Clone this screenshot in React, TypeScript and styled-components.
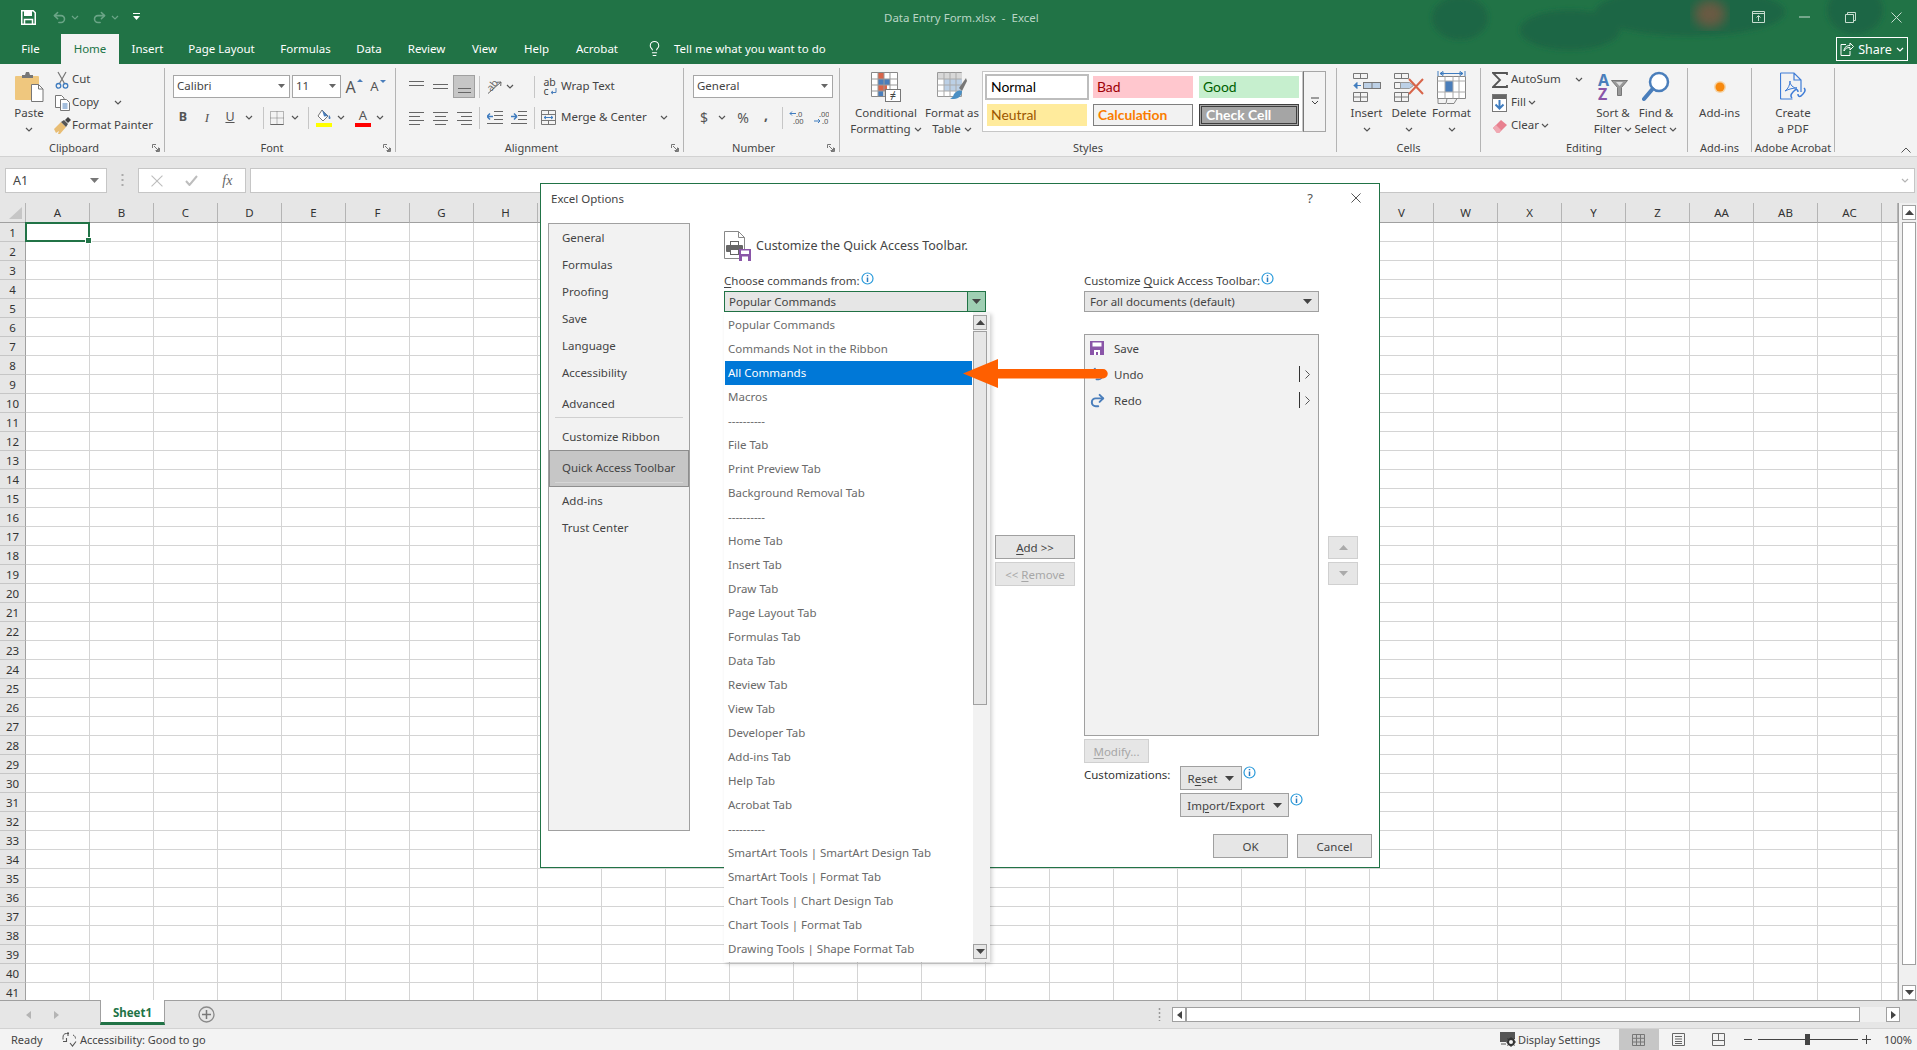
import React from "react";
import styled, { createGlobalStyle } from "styled-components";
import { Lightbulb, Undo2, Redo2 } from "lucide-react";

const Global = createGlobalStyle`
  html, body { margin: 0; width: 100%; height: 100%; overflow: hidden; background: #fff; }
  body { font-family: "Noto Sans", "Open Sans", sans-serif; font-size: 11.5px; color: #444; }
  * { box-sizing: border-box; }
  svg { display: block; flex: none; }
`;

const Page = styled.div`
  position: relative; width: 1917px; height: 1050px; display: flex; flex-direction: column; overflow: hidden;
`;

/* ---------- header ---------- */
const Header = styled.header`
  position: relative; height: 64px; background: #217346; display: flex; flex-direction: column; color: #fff; overflow: hidden;
`;
const Art = styled.svg`
  position: absolute; left: 1400px; top: 0;
`;
const TitleRow = styled.div`
  position: relative; height: 34px; display: flex; align-items: center;
`;
const Qat = styled.div`
  width: 884px; padding-left: 21px; display: flex; align-items: center;
`;
const QatSlot = styled.div<{ $w: number }>`
  width: ${p => p.$w}px; display: flex; align-items: center; gap: 4px;
`;
const DocTitle = styled.div`
  color: #b9d5c5; font-size: 11.5px; white-space: pre;
`;
const Controls = styled.div`
  margin-left: auto; margin-right: -2px; display: flex;
`;
const ControlBtn = styled.div`
  width: 46px; height: 30px; display: flex; align-items: center; justify-content: center;
`;
const TabRow = styled.nav`
  position: relative; height: 30px; display: flex; align-items: stretch;
`;
const Tab = styled.div<{ $w: number; $active?: boolean }>`
  width: ${p => p.$w}px; padding-bottom: 2px; display: flex; align-items: center; justify-content: center; white-space: nowrap;
  font-size: 11.5px;
  background: ${p => (p.$active ? "#f3f3f3" : "transparent")};
  color: ${p => (p.$active ? "#217346" : "#fff")};
`;
const TellMe = styled.div`
  margin-left: 15px; padding-bottom: 2px; display: flex; align-items: center; gap: 11px; font-size: 11.5px; white-space: nowrap;
`;
const ShareBtn = styled.div`
  margin: 3px 9px 3px auto; width: 72px; border: 1px solid #fff; display: flex; align-items: center; justify-content: center;
  gap: 4px; font-size: 12.5px;
`;

/* ---------- ribbon ---------- */
const Ribbon = styled.section`
  height: 93px; background: #f3f3f3; border-bottom: 1px solid #d2d2d2; padding-top: 4px; display: flex; position: relative;
`;
const Group = styled.div<{ $w: number }>`
  width: ${p => p.$w}px; height: 84px; border-right: 1px solid #b4b4b4; display: flex; flex-direction: column; flex: none;
`;
const GroupBody = styled.div<{ $pl?: number }>`
  height: 72px; display: flex; padding-left: ${p => p.$pl ?? 0}px;
`;
const GroupFoot = styled.div`
  height: 16px; margin-bottom: -4px; display: flex; align-items: center;
`;
const GroupLabel = styled.div`
  flex: 1; text-align: center; font-size: 11px; line-height: 16px; white-space: nowrap; color: #444;
`;
const Launcher = styled.div`
  width: 16px; display: flex; justify-content: center;
`;
const Big = styled.div<{ $w: number }>`
  width: ${p => p.$w}px; flex: none; padding-top: 4px; display: flex; flex-direction: column; align-items: center;
`;
const BigIcon = styled.div`
  height: 30px; margin-bottom: 3px; display: flex; align-items: center; justify-content: center;
`;
const BigLine = styled.div`
  height: 16px; line-height: 16px; display: flex; align-items: center; gap: 3px; white-space: nowrap; font-size: 11.5px;
`;
const Stack = styled.div<{ $pt?: number; $w?: number }>`
  display: flex; flex-direction: column; padding-top: ${p => p.$pt ?? 0}px;
  ${p => (p.$w ? `width: ${p.$w}px; flex: none;` : "")}
`;
const Row = styled.div<{ $ml?: number; $mt?: number }>`
  height: 23px; display: flex; align-items: center;
  margin-left: ${p => p.$ml ?? 0}px; margin-top: ${p => p.$mt ?? 0}px;
`;
const Slot = styled.div<{ $w: number; $ml?: number }>`
  width: ${p => p.$w}px; margin-left: ${p => p.$ml ?? 0}px; flex: none; display: flex; align-items: center; justify-content: center; position: relative;
`;
const ActiveSlot = styled.div`
  width: 22px; height: 23px; margin: 0 1px; background: #c6c6c6; border: 1px solid #a0a0a0; display: flex; align-items: center; justify-content: center; flex: none;
`;
const Txt = styled.span<{ $w?: number; $ml?: number }>`
  white-space: nowrap; font-size: 11.5px; flex: none; padding-bottom: 2px;
  margin-left: ${p => p.$ml ?? 0}px;
  ${p => (p.$w ? `width: ${p.$w}px;` : "")}
`;
const StatusTxt = styled(Txt)`
  font-size: 11px; padding-bottom: 0;
`;
const VSep = styled.div<{ $w: number; $ml?: number }>`
  width: ${p => p.$w}px; margin-left: ${p => p.$ml ?? 0}px; flex: none; display: flex; justify-content: center;
  &::before { content: ""; width: 1px; height: 22px; background: #c6c6c6; }
`;
const Combo = styled.div<{ $w: number; $ml?: number }>`
  width: ${p => p.$w}px; height: 23px; margin-left: ${p => p.$ml ?? 0}px; background: #fff; border: 1px solid #a6a6a6;
  display: flex; align-items: center; justify-content: space-between; padding: 0 4px 2px 3px; flex: none; font-size: 11.5px;
`;
const Glyph = styled.span<{ $size?: number; $bold?: boolean; $italic?: boolean; $under?: boolean; $serif?: boolean; $pb?: number }>`
  font-size: ${p => p.$size ?? 12}px; font-weight: ${p => (p.$bold ? 700 : 400)};
  font-style: ${p => (p.$italic ? "italic" : "normal")};
  font-family: ${p => (p.$serif ? '"Liberation Serif", serif' : "inherit")};
  text-decoration: ${p => (p.$under ? "underline" : "none")};
  padding-bottom: ${p => p.$pb ?? 0}px;
  color: #555; line-height: 1;
`;
const SizeGlyph = styled.div`
  display: flex; align-items: flex-start; gap: 1px;
`;
const ColorGlyph = styled.div`
  display: flex; flex-direction: column; align-items: center; line-height: 1;
`;
const ColorBar = styled.div<{ $c: string }>`
  width: 16px; height: 4px; background: ${p => p.$c}; margin-top: 1px;
`;
const Gallery = styled.div`
  width: 321px; height: 61px; margin-top: 3px; background: #fff; border: 1px solid #c6c6c6; flex: none;
  display: grid; grid-template-columns: repeat(3, 100px); grid-auto-rows: 22px; gap: 6px; padding: 4px;
`;
const MoreBtn = styled.div`
  width: 23px; height: 61px; margin-top: 3px; border: 1px solid #a6a6a6; border-left-color: #777; flex: none; display: flex; align-items: center; justify-content: center;
`;
const StyleCell = styled.div<{ $bg: string; $c: string; $bold?: boolean; $border?: string; $outline?: string }>`
  background: ${p => p.$bg}; color: ${p => p.$c}; font-family: Lato, "Noto Sans", sans-serif; font-size: 13.9px;
  font-weight: ${p => (p.$bold ? 700 : 400)}; display: flex; align-items: center; padding: 0 0 2px 4px; white-space: nowrap;
  ${p => (p.$border ? `border: ${p.$border};` : "")}
  ${p => (p.$outline ? `outline: ${p.$outline};` : "")}
`;
const Collapse = styled.div`
  position: absolute; right: 6px; bottom: 3px;
`;
const WrapBox = styled.div`
  display: flex; flex-direction: column; font-size: 10.5px; line-height: 9px; color: #444;
`;
const WrapLine = styled.div`
  height: 9px; display: flex; align-items: center; gap: 1px;
`;
const OrientBox = styled.div`
  position: relative; width: 18px; height: 17px; display: flex; align-items: center; justify-content: center;
  font-size: 10px; line-height: 10px; color: #666;
  svg { position: absolute; left: 0; top: 0; }
`;
const OrientText = styled.span`
  display: block; transform: translate(-2px, -2px) rotate(-50deg);
`;
const SortBox = styled.div`
  display: flex; align-items: flex-start; width: 30px;
`;
const SortLetters = styled.div`
  display: flex; flex-direction: column; width: 12px; margin-right: 1px; font-weight: 700; font-size: 16px; line-height: 14px;
`;
const SortLetter = styled.span<{ $c: string }>`
  color: ${p => p.$c}; height: 14px; display: block;
`;
const Funnel = styled.svg`
  margin-top: 7px;
`;

/* ---------- formula bar ---------- */
const FormulaBar = styled.div`
  height: 46px; background: #e6e6e6; padding: 11px 2px 10px 5px; display: flex;
`;
const NameBox = styled.div`
  width: 102px; background: #fff; border: 1px solid #c6c6c6; display: flex; align-items: center; justify-content: space-between; padding: 0 7px; font-size: 12.5px; color: #444;
`;
const Dots = styled.div`
  width: 31px; display: flex; align-items: center; justify-content: center;
`;
const FxBox = styled.div`
  width: 108px; background: #fff; border: 1px solid #c6c6c6; display: flex; align-items: center;
`;
const FxSlot = styled.div`
  width: 36px; display: flex; align-items: center; justify-content: center;
`;
const FxText = styled.span`
  font-family: "Liberation Serif", serif; font-style: italic; font-size: 14px; color: #666;
`;
const FormulaInput = styled.div`
  flex: 1; margin-left: 4px; background: #fff; border: 1px solid #c6c6c6; display: flex; align-items: center; justify-content: flex-end; padding-right: 5px;
`;

/* ---------- sheet ---------- */
const SheetArea = styled.div`
  flex: 1; min-height: 0; display: flex;
`;
const Sheet = styled.div`
  width: 1898px; overflow: hidden; display: grid; grid-template-columns: 26px repeat(29, 64px) 16px; grid-template-rows: 20px; grid-auto-rows: 19px; background: #fff;
`;
const CornerCell = styled.div`
  background: #e6e6e6; border-right: 1px solid #b4b4b4; border-bottom: 1px solid #a0a0a0; display: flex; align-items: flex-end; padding: 0 0 3px 9px;
`;
const ColHead = styled.div`
  background: #e6e6e6; border-right: 1px solid #b4b4b4; border-bottom: 1px solid #a0a0a0; display: flex; align-items: center; justify-content: center; font-size: 11.5px; color: #333;
`;
const RowHead = styled.div`
  background: #e6e6e6; border-right: 1px solid #a0a0a0; border-bottom: 1px solid #c6c6c6; display: flex; align-items: center; justify-content: center; font-size: 11.5px; color: #333;
`;
const Cell = styled.div`
  border-right: 1px solid #d4d4d4; border-bottom: 1px solid #d4d4d4;
`;
const SelectedCell = styled(Cell)`
  position: relative;
  &::after { content: ""; position: absolute; left: -1px; top: -1px; right: -1px; bottom: -1px; border: 2px solid #217346; z-index: 1; }
  &::before { content: ""; position: absolute; right: -3px; bottom: -3px; width: 5px; height: 5px; background: #217346; border: 1px solid #fff; z-index: 2; }
`;
const VScroll = styled.div`
  width: 19px; background: #f0f0f0; border-left: 1px solid #a0a0a0; display: flex; flex-direction: column; align-items: flex-end; padding: 2px 1px 0 0;
`;
const ScrollBtn = styled.div<{ $w?: number; $h?: number; $bottom?: boolean }>`
  width: ${p => p.$w ?? 14}px; height: ${p => p.$h ?? 15}px; background: #fff; border: 1px solid #a0a0a0; flex: none; display: flex; align-items: center; justify-content: center;
  ${p => (p.$bottom ? "margin-top: auto;" : "")}
`;
const VThumb = styled.div`
  width: 14px; height: 743px; margin-top: 2px; background: #fff; border: 1px solid #a0a0a0; flex: none;
`;
const SheetBar = styled.div`
  height: 28px; background: #e6e6e6; border-top: 1px solid #a0a0a0; display: flex; position: relative;
`;
const NavArrows = styled.div`
  width: 100px; display: flex; align-items: center; padding-left: 26px; gap: 23px;
`;
const SheetTab = styled.div`
  width: 65px; height: 25px; margin-top: -1px; padding-top: 2px; background: #fff; border: 1px solid #a0a0a0; border-top: 0; border-bottom: 3px solid #217346; color: #217346; font-weight: 700; font-size: 11.5px; display: flex; align-items: center; justify-content: center;
`;
const AddSheet = styled.div`
  margin-left: 33px; display: flex; align-items: center;
`;
const HDots = styled.div`
  margin-left: 932px; width: 24px; display: flex; align-items: center; justify-content: center;
`;
const HScroll = styled.div`
  margin-left: 1px; display: flex; align-items: center; height: 15px; margin-top: 6px;
`;
const HThumb = styled.div`
  width: 674px; height: 15px; background: #fff; border: 1px solid #a0a0a0;
`;
const HTrack = styled.div`
  width: 26px; height: 15px; background: #f0f0f0;
`;
const StatusBar = styled.footer`
  height: 22px; background: #f3f3f3; border-top: 1px solid #d2d2d2; display: flex; align-items: center; padding-left: 11px; font-size: 11px; color: #444;
`;
const StatusRight = styled.div`
  margin-left: auto; margin-right: 5px; height: 100%; display: flex; align-items: center;
`;
const ViewBtn = styled.div<{ $on?: boolean }>`
  width: 40px; height: 100%; display: flex; align-items: center; justify-content: center; background: ${p => (p.$on ? "#c6c6c6" : "transparent")};
`;
const ZoomTrack = styled.div`
  position: relative; width: 100px; height: 1px; margin-left: 1px; background: #444;
`;
const ZoomThumb = styled.div`
  position: absolute; left: 47px; top: -5px; width: 5px; height: 11px; background: #444;
`;

/* ---------- dialog ---------- */
const Dialog = styled.div`
  position: absolute; left: 540px; top: 183px; width: 840px; height: 685px; background: #fff; border: 1px solid #217346; display: flex; flex-direction: column; z-index: 5; color: #444;
`;
const DialogHead = styled.div`
  height: 39px; flex: none; display: flex; padding: 0 0 11px 10px; align-items: center;
`;
const DialogTitle = styled.div`
  flex: 1; font-size: 11.5px; color: #444;
`;
const HeadBtn = styled.div`
  width: 46px; display: flex; align-items: center; justify-content: center; font-size: 13px; color: #555;
`;
const DialogBody = styled.div`
  flex: 1; display: flex; padding-left: 7px; min-height: 0;
`;
const Nav = styled.div`
  width: 142px; height: 608px; flex: none; background: #f2f2f2; border: 1px solid #a0a0a0; display: flex; flex-direction: column;
`;
const NavItem = styled.div<{ $mt?: number }>`
  height: 27px; flex: none; line-height: 27px; padding-left: 13px; font-size: 11.5px; white-space: nowrap; margin-top: ${p => p.$mt ?? 0}px; color: #444;
`;
const NavRule = styled.div`
  height: 1px; flex: none; margin: 0 6px; background: #d0d0d0;
`;
const NavSelected = styled.div`
  position: relative; height: 37px; flex: none; background: #c6c6c6; border: 1px solid #8e8e8e; padding-left: 12px; line-height: 33px; font-size: 11.5px; white-space: nowrap; color: #444;
  &::after { content: ""; position: absolute; left: 5px; right: 5px; bottom: 3px; height: 1px; background: #d6d6d6; }
`;
const Main = styled.div`
  flex: 1; margin-left: 34px; padding-top: 8px; display: flex; flex-direction: column;
`;
const Heading = styled.div`
  height: 30px; flex: none; display: flex; align-items: center; gap: 4px; font-size: 12.5px; color: #444; margin-bottom: 10px;
  span { padding-bottom: 2px; }
`;
const Columns = styled.div`
  display: flex; flex: none;
`;
const LeftCol = styled.div`
  width: 262px; flex: none; position: relative;
`;
const FieldLabel = styled.div`
  height: 20px; display: flex; align-items: center; gap: 1px; font-size: 11.5px; white-space: nowrap; color: #444;
  span { padding-bottom: 2px; }
  svg { margin-top: -5px; }
`;
const Mn = styled.span`
  text-decoration: underline; text-underline-offset: 2px;
`;
const OpenCombo = styled.div`
  height: 21px; background: #e6e6e6; border: 1px solid #217346; display: flex; align-items: center; padding-left: 4px; font-size: 11.5px; color: #444; position: relative;
`;
const ComboArrow = styled.div`
  margin-left: auto; width: 18px; height: 100%; background: #9fcfb3; border-left: 1px solid #217346; display: flex; align-items: center; justify-content: center;
`;
const Dropdown = styled.div`
  position: absolute; left: 0; top: 41px; width: 266px; height: 650px; background: #fff; box-shadow: 2px 2px 4px rgba(0, 0, 0, 0.18); display: flex; z-index: 6; padding-left: 1px;
`;
const DropList = styled.div`
  width: 247px; flex: none; padding-top: 1px; display: flex; flex-direction: column;
`;
const DropItem = styled.div<{ $on?: boolean }>`
  height: 24px; flex: none; line-height: 24px; padding-left: 3px; font-size: 11.5px; white-space: nowrap;
  background: ${p => (p.$on ? "#0078d7" : "transparent")}; color: ${p => (p.$on ? "#fff" : "#6a6a6a")};
`;
const DropScroll = styled.div`
  flex: 1; margin-left: 1px; background: #f2f2f2; padding: 3px 3px 3px 0; display: flex; flex-direction: column;
`;
const DropThumb = styled.div`
  height: 374px; margin-top: 1px; background: #e6e6e6; border: 1px solid #a0a0a0; flex: none;
`;
const DropBtn = styled.div<{ $bottom?: boolean }>`
  height: 15px; flex: none; background: #e6e6e6; border: 1px solid #a0a0a0; display: flex; align-items: center; justify-content: center;
  ${p => (p.$bottom ? "margin-top: auto;" : "")}
`;
const MidCol = styled.div`
  width: 98px; flex: none; padding: 264px 0 0 9px; display: flex; flex-direction: column; gap: 3px;
`;
const Btn = styled.div<{ $w: number; $off?: boolean; $mt?: number }>`
  width: ${p => p.$w}px; height: 24px; flex: none; display: flex; align-items: center; justify-content: center; gap: 8px; white-space: nowrap; font-size: 11.5px;
  margin-top: ${p => p.$mt ?? 0}px;
  background: #e6e6e6; border: 1px solid ${p => (p.$off ? "#d0d0d0" : "#a0a0a0")}; color: ${p => (p.$off ? "#a6a6a6" : "#444")};
`;
const RightCol = styled.div`
  width: 235px; flex: none; display: flex; flex-direction: column;
`;
const PlainCombo = styled.div`
  height: 21px; background: #e6e6e6; border: 1px solid #a0a0a0; display: flex; align-items: center; justify-content: space-between; padding: 0 6px 0 5px; font-size: 11.5px; color: #444;
`;
const QatList = styled.div`
  height: 402px; margin-top: 22px; background: #f2f2f2; border: 1px solid #a0a0a0; padding: 0 8px 0 2px; flex: none;
`;
const QatRow = styled.div`
  height: 26px; display: flex; align-items: center; font-size: 11.5px; color: #444;
`;
const QatIcon = styled.div`
  width: 20px; margin-right: 7px; display: flex; justify-content: center;
`;
const QatMore = styled.div`
  margin-left: auto; display: flex; align-items: center; gap: 5px;
  &::before { content: ""; width: 1px; height: 16px; background: #333; }
`;
const CustomRow = styled.div`
  display: flex; margin-top: 3px;
`;
const CustomLabel = styled.div`
  width: 96px; flex: none; font-size: 11.5px; line-height: 18px; white-space: nowrap; color: #333;
`;
const CustomBtns = styled.div`
  display: flex; flex-direction: column; gap: 3px;
`;
const BtnWithInfo = styled.div`
  display: flex; align-items: flex-start; gap: 0;
`;
const InfoWrap = styled.div`
  margin-left: 1px;
`;
const SideCol = styled.div`
  flex: none; margin-left: 9px; padding-top: 265px; display: flex; flex-direction: column; gap: 3px;
`;
const MoveBtn = styled.div`
  width: 30px; height: 23px; background: #e6e6e6; border: 1px solid #d0d0d0; display: flex; align-items: center; justify-content: center;
`;
const Footer = styled.div`
  margin-top: 17px; padding-right: 7px; display: flex; justify-content: flex-end; gap: 9px;
`;
const ArrowOverlay = styled.svg`
  position: absolute; left: 963px; top: 359px; z-index: 8;
`;

/* ---------- icons ---------- */
const Chev = ({ c = "#555" }: { c?: string }) => (
  <svg width="8" height="5" viewBox="0 0 8 5"><path d="M1 1l3 3 3-3" fill="none" stroke={c} strokeWidth="1.2" /></svg>
);
const Tri = ({ c = "#444", up }: { c?: string; up?: boolean }) => (
  <svg width="9" height="5" viewBox="0 0 9 5"><path d={up ? "M0 5L4.5 0 9 5z" : "M0 0h9L4.5 5z"} fill={c} /></svg>
);
const TriSm = () => (
  <svg width="7" height="4" viewBox="0 0 7 4"><path d="M0 0h7L3.5 4z" fill="#666" /></svg>
);
const MiniTri = ({ up }: { up?: boolean }) => (
  <svg width="6" height="3" viewBox="0 0 6 3"><path d={up ? "M0 3l3-3 3 3z" : "M0 0h6L3 3z"} fill="#4a7ebb" /></svg>
);
const LauncherIcon = () => (
  <svg width="8" height="8" viewBox="0 0 8 8"><path d="M.5 4V.5H4M7.5 4v3.5H4M2 2l4.5 4.5M6.5 3.5v3h-3" fill="none" stroke="#777" strokeWidth="1" /></svg>
);
const Info = () => (
  <svg width="13" height="13" viewBox="0 0 13 13"><circle cx="6.5" cy="6.5" r="5.5" fill="#fff" stroke="#2b9bdb" strokeWidth="1.2" /><path d="M6.5 3v1.3M6.5 5.5v4.5" stroke="#2b7bc0" strokeWidth="1.5" /></svg>
);
const SaveWhite = () => (
  <svg width="15" height="15" viewBox="0 0 15 15"><path d="M.75.75h11.5l2 2v11.5H.75z" fill="none" stroke="#fff" strokeWidth="1.5" /><rect x="3" y="1" width="8" height="5" fill="#fff" /><path d="M3.5 14V9.5h8V14" fill="none" stroke="#fff" strokeWidth="1.5" /></svg>
);
const CustomizeQat = () => (
  <svg width="7" height="8" viewBox="0 0 7 8"><path d="M0 .5h7" stroke="#fff" /><path d="M0 3h7L3.5 7z" fill="#fff" /></svg>
);
const Paste = () => (
  <svg width="29" height="30" viewBox="0 0 29 30">
    <rect x="0" y="4" width="24" height="24" rx="1" fill="#efc77e" />
    <path d="M7 5V3h3l1-3h3l1 3h3v3H7z" fill="#777" />
    <path d="M16.5 12.5h7l4.5 4.5v12.5H16.5z" fill="#fff" stroke="#777" />
    <path d="M23.5 12.5V17H28" fill="none" stroke="#777" />
  </svg>
);
const Cut = () => (
  <svg width="14" height="18" viewBox="0 0 14 18">
    <path d="M4.5 12.5L11 1M9.5 12.5L3 1" stroke="#777" strokeWidth="1.2" fill="none" />
    <circle cx="3.5" cy="14.8" r="2.3" fill="none" stroke="#3f7cbf" strokeWidth="1.3" />
    <circle cx="10.5" cy="14.8" r="2.3" fill="none" stroke="#3f7cbf" strokeWidth="1.3" />
  </svg>
);
const Copy = () => (
  <svg width="15" height="16" viewBox="0 0 15 16">
    <path d="M.5.5h6l2.5 2.5v9.5H.5z" fill="#fff" stroke="#777" />
    <path d="M5.5 4.5h6l3 3v8h-9z" fill="#fff" stroke="#777" />
    <path d="M7.5 9h5M7.5 11h5M7.5 13h5" stroke="#4a7ebb" />
  </svg>
);
const Painter = () => (
  <svg width="17" height="17" viewBox="0 0 17 17">
    <path d="M0 12l7-7 5 5-6 7H4l1-3-3 2z" fill="#e8bd74" />
    <path d="M7 5l3-2 4 4-2 3z" fill="#555" />
    <path d="M11 3l3-3 3 3-3 3z" fill="#444" />
  </svg>
);
const FillIcon = () => (
  <svg width="16" height="13" viewBox="0 0 16 13">
    <path d="M6 1l6 6-5 5-5-5z" fill="#fff" stroke="#777" />
    <path d="M6 1l6 6-4 .5z" fill="#4a7ebb" />
    <path d="M13 6c1.500 2 2 3 1 4-1 .5-2-.5-1-4z" fill="#4a7ebb" />
  </svg>
);
const BordersIcon = () => (
  <svg width="14" height="14" viewBox="0 0 14 14">
    <path d="M.5.5h13v13H.5zM7 .5v13M.5 7h13" fill="none" stroke="#777" strokeDasharray="1 1" />
    <path d="M.5 13.500h13" stroke="#666" />
  </svg>
);
const Lines = ({ rows, w = 15 }: { rows: [number, number, number][]; w?: number }) => (
  <svg width={w} height="15" viewBox={`0 0 ${w} 15`}>
    {rows.map((r, i) => <path key={i} d={`M${r[0]} ${r[2] + 0.5}H${r[1]}`} stroke="#666" />)}
  </svg>
);
const Orient = () => (
  <OrientBox>
    <svg width="18" height="17" viewBox="0 0 18 17"><path d="M3 15.500L16 4M16 4l-4 .3M16 4l-.3 4" stroke="#666" fill="none" /></svg>
    <OrientText>ab</OrientText>
  </OrientBox>
);
const WrapIcon = () => (
  <WrapBox>
    <WrapLine>ab</WrapLine>
    <WrapLine>c
      <svg width="7" height="7" viewBox="0 0 7 7"><path d="M6 0v4.500H1M3 3L1 4.500 3 6" fill="none" stroke="#4a7ebb" /></svg>
    </WrapLine>
  </WrapBox>
);
const MergeIcon = () => (
  <svg width="15" height="15" viewBox="0 0 15 15">
    <path d="M.5.500h14v14H.5zM.5 4.500h14M.5 10.500h14M7.500.500v4M7.500 10.500v4" fill="none" stroke="#777" />
    <path d="M3 7.500h9M3 7.500l2-1.500M3 7.500l2 1.500M12 7.500l-2-1.500M12 7.500l-2 1.500" fill="none" stroke="#3f7cbf" />
  </svg>
);
const Indent = ({ right }: { right?: boolean }) => (
  <svg width="16" height="14" viewBox="0 0 16 14">
    <path d="M7 .5h9M7 4.500h9M7 8.500h9M0 12.500h16" stroke="#666" />
    <path d={right ? "M0 5.500h6M6 5.500l-3-3M6 5.500l-3 3" : "M0 5.500h6M0 5.500l3-3M0 5.500l3 3"} fill="none" stroke="#3f7cbf" strokeWidth="1.5" />
  </svg>
);
const DecMore = () => (
  <svg width="16" height="15" viewBox="0 0 16 15">
    <text x="7" y="6.500" fontSize="7.500" fill="#555" fontFamily="Noto Sans">.0</text>
    <text x="4" y="14" fontSize="7.500" fill="#555" fontFamily="Noto Sans">.00</text>
    <path d="M7 3.500H1M1 3.500l2-2M1 3.500l2 2" fill="none" stroke="#3f7cbf" />
  </svg>
);
const DecLess = () => (
  <svg width="16" height="15" viewBox="0 0 16 15">
    <text x="6" y="6.500" fontSize="7.500" fill="#555" fontFamily="Noto Sans">.00</text>
    <text x="9" y="14" fontSize="7.500" fill="#555" fontFamily="Noto Sans">.0</text>
    <path d="M1 11h6M7 11l-2-2M7 11l-2 2" fill="none" stroke="#3f7cbf" />
  </svg>
);
const CondFormat = () => (
  <svg width="30" height="30" viewBox="0 0 30 30">
    <path d="M.5.500h26v24H.5z" fill="#fff" stroke="#888" />
    <rect x="7" y="1" width="6" height="6" fill="#d8654a" />
    <rect x="7" y="7" width="12" height="6" fill="#4a7ebb" />
    <rect x="7" y="13" width="9" height="6" fill="#d8654a" />
    <rect x="7" y="19" width="5" height="5" fill="#4a7ebb" />
    <path d="M7 .5v24M13 .5v24M19 .5v24M.5 7h26M.5 13h26M.5 19h26" stroke="#999" fill="none" />
    <rect x="14.500" y="17.500" width="15" height="12" fill="#fff" stroke="#777" />
    <text x="22" y="27" fontSize="11" textAnchor="middle" fill="#444" fontFamily="Noto Sans">≠</text>
  </svg>
);
const TableFormat = () => (
  <svg width="30" height="30" viewBox="0 0 30 30">
    <path d="M.5.500h24v24H.5z" fill="#fff" stroke="#999" />
    <rect x="7" y="7" width="18" height="12" fill="#bcd0e6" />
    <rect x="1" y="1" width="24" height="6" fill="#d8d8d8" />
    <path d="M7 .5v24M13 .5v24M19 .5v24M.5 7h24M.5 13h24M.5 19h24" stroke="#aaa" fill="none" />
    <path d="M22 16l7-10 1 3-5 10z" fill="#777" />
    <path d="M17 22c3-4 6-4 8-3 0 4-3 8-8 8-2 0-3 0-4-1 3 0 3-2 4-4z" fill="#4a8fc4" />
  </svg>
);
const InsertIcon = () => (
  <svg width="28" height="30" viewBox="0 0 28 30">
    <path d="M.5 1.500h14v5H.5zM7.500 1.500v5M.5 20.500h14v9H.5zM.5 25h14M7.500 20.500v9" fill="none" stroke="#777" />
    <rect x="10.500" y="10.500" width="17" height="6" fill="#bcd0e6" stroke="#777" />
    <path d="M19 10.500v6" stroke="#777" />
    <path d="M8 13.500H1M1 13.500l3-3v6z" fill="#3f7cbf" stroke="#3f7cbf" />
  </svg>
);
const DeleteIcon = () => (
  <svg width="30" height="30" viewBox="0 0 30 30">
    <path d="M.5 1.500h14v5H.5zM7.500 1.500v5M.5 20.500h14v9H.5zM.5 25h14M7.500 20.500v9" fill="none" stroke="#777" />
    <path d="M.5 10.500h12v6H.5z" fill="none" stroke="#777" />
    <path d="M6.500 10.500h9l4 3-4 3h-9z" fill="#bcd0e6" stroke="#999" />
    <path d="M15 7l14 15M29 7L15 22" stroke="#d8654a" strokeWidth="2" />
  </svg>
);
const FormatIcon = () => (
  <svg width="29" height="34" viewBox="0 0 29 34">
    <path d="M1 1v5M28 1v5M3 3.500h23M3 3.500l3-2v4zM26 3.500l-3-2v4z" stroke="#3f7cbf" fill="none" />
    <path d="M.5 6.500h28v22H.5z" fill="#fff" stroke="#888" />
    <rect x="8" y="11" width="8" height="11" fill="#4a7ebb" />
    <path d="M8 6.500v22M16 6.500v22M22 6.500v22M.5 11h28M.5 22h28" fill="none" stroke="#aaa" />
    <path d="M1 28.500v5h8l1-5M10 33.500h7l3-5" fill="none" stroke="#888" />
  </svg>
);
const Sigma = () => (
  <svg width="16" height="16" viewBox="0 0 16 16"><path d="M15 3V1H1l7 7-7 7h14v-2" fill="none" stroke="#555" strokeWidth="1.800" /></svg>
);
const FillDown = () => (
  <svg width="15" height="18" viewBox="0 0 15 18">
    <rect x=".5" y=".5" width="14" height="17" fill="#fff" stroke="#777" />
    <rect x="1" y="1" width="13" height="4" fill="#666" />
    <path d="M7.500 6v8M3.500 10.500l4 4 4-4" fill="none" stroke="#3f7cbf" strokeWidth="2" />
  </svg>
);
const Eraser = () => (
  <svg width="14" height="14" viewBox="0 0 14 14"><path d="M0 9l8-8 6 5-8 8H4z" fill="#e8808f" /><path d="M0 9l3-3 5 5-2 3H4z" fill="#f0a8b2" /></svg>
);
const SortIcon = () => (
  <SortBox>
    <SortLetters>
      <SortLetter $c="#4a7ebb">A</SortLetter>
      <SortLetter $c="#8a55a8">Z</SortLetter>
    </SortLetters>
    <Funnel width="17" height="16" viewBox="0 0 17 16">
      <path d="M.5.500h16l-6 7v8h-4v-8z" fill="#999" stroke="#777" />
      <path d="M5 2h7l-3.500 4z" fill="#ddd" />
    </Funnel>
  </SortBox>
);
const FindIcon = () => (
  <svg width="28" height="32" viewBox="0 0 28 32">
    <circle cx="17" cy="11" r="9" fill="#fff" stroke="#4a7ebb" strokeWidth="2.500" />
    <path d="M10.500 18L2 28" stroke="#4a7ebb" strokeWidth="4" strokeLinecap="round" />
  </svg>
);
const Dot = () => (
  <svg width="16" height="16" viewBox="0 0 16 16"><circle cx="8" cy="8" r="6" fill="#f79a1e" opacity=".35" /><circle cx="8" cy="8" r="4.500" fill="#f7890e" /></svg>
);
const PdfIcon = () => (
  <svg width="26" height="32" viewBox="0 0 26 32">
    <path d="M1 2h13l7 7v12M21 9h-7V2M1 2c-.5 0-.5 .5-.5 1v24c0 1 .5 1 1 1h11" fill="none" stroke="#3f7cd6" strokeWidth="1.200" />
    <path d="M5 20c3-2 5-6 5-10 0 4 3 7 7 7-4 0-8 1-12 3z" fill="none" stroke="#3f7cd6" />
    <path d="M13 27c-2-2-1-4 1-6l2-2c2-1 3 0 3 2M25 17c2 2 1 4-1 6l-2 2c-2 1-3 0-3-2" transform="translate(-1 0)" fill="none" stroke="#3f7cd6" strokeWidth="1.500" />
  </svg>
);
const ShareIcon = () => (
  <svg width="14" height="14" viewBox="0 0 14 14"><path d="M6 2.500H1v11h9V9M4 9c0-4 3-5.500 6-5.500V1l3.500 3.500L10 8V5.500C7 5.500 5 6.500 4 9z" fill="none" stroke="#fff" /></svg>
);
const RibbonDisplay = () => (
  <svg width="13" height="12" viewBox="0 0 13 12"><path d="M.5.500h12v11H.5zM.5 2.500h12" fill="none" stroke="#c8ddd0" /><path d="M6.500 10V5M4.500 6.500l2-2 2 2" fill="none" stroke="#c8ddd0" /></svg>
);
const Minimize = () => <svg width="11" height="2" viewBox="0 0 11 2"><path d="M0 1h11" stroke="#c8ddd0" /></svg>;
const Restore = () => (
  <svg width="11" height="11" viewBox="0 0 11 11"><path d="M.5 2.500h8v8h-8zM2.500 2.500v-2h8v8h-2" fill="none" stroke="#c8ddd0" /></svg>
);
const CloseX = ({ c = "#c8ddd0", s = 11 }: { c?: string; s?: number }) => (
  <svg width={s} height={s} viewBox="0 0 11 11"><path d="M.5.500l10 10M10.500.500l-10 10" stroke={c} fill="none" /></svg>
);
const DotsV = () => (
  <svg width="3" height="13" viewBox="0 0 3 13"><path d="M1.500 0v13" stroke="#aaa" strokeWidth="2" strokeDasharray="2 3" /></svg>
);
const DotsH = () => (
  <svg width="3" height="13" viewBox="0 0 3 13"><path d="M1.500 0v13" stroke="#999" strokeWidth="1.500" strokeDasharray="2 2" /></svg>
);
const Check = () => (
  <svg width="13" height="11" viewBox="0 0 13 11"><path d="M1 6l3.500 4L12 1" fill="none" stroke="#bdbdbd" strokeWidth="2" /></svg>
);
const Corner = () => <svg width="13" height="12" viewBox="0 0 13 12"><path d="M13 0v12H0z" fill="#c6c6c6" /></svg>;
const NavTri = ({ right }: { right?: boolean }) => (
  <svg width="5" height="8" viewBox="0 0 5 8"><path d={right ? "M0 0l5 4-5 4z" : "M5 0L0 4l5 4z"} fill="#b4b4b4" /></svg>
);
const AddCircle = () => (
  <svg width="17" height="17" viewBox="0 0 17 17"><circle cx="8.500" cy="8.500" r="7.500" fill="none" stroke="#8a8a8a" strokeWidth="1.300" /><path d="M8.500 4v9M4 8.500h9" stroke="#777" strokeWidth="1.500" /></svg>
);
const A11y = () => (
  <svg width="15" height="16" viewBox="0 0 15 16">
    <path d="M7 1.500H4.500C2 1.500 1 3 1 5.500v2M11 3c1.500 .5 2.500 2 2.500 3.500" fill="none" stroke="#555" />
    <path d="M6 0v4M4.500 6v4M1 9.500l3 0M8 11l2.500 3L14 9.500" fill="none" stroke="#555" strokeWidth="1.100" />
  </svg>
);
const Display = () => (
  <svg width="16" height="15" viewBox="0 0 16 15">
    <path d="M0 0h15v7H9L6 10H0z" fill="#555" />
    <path d="M1 12h5" stroke="#555" />
    <circle cx="11" cy="10" r="3" fill="none" stroke="#333" strokeWidth="2" />
    <path d="M11 5v2M11 13v2M6 10h2M14 10h2M7.500 6.500l1.500 1.500M13 12l1.500 1.500M14.500 6.500L13 8M9 12l-1.500 1.500" stroke="#333" />
  </svg>
);
const NormalView = () => (
  <svg width="13" height="12" viewBox="0 0 13 12"><path d="M.5.500h12v11H.5zM4.500.500v11M8.500.500v11M.5 4.300h12M.5 8h12" fill="none" stroke="#777" /></svg>
);
const PageView = () => (
  <svg width="13" height="13" viewBox="0 0 13 13"><path d="M.5.500h12v12H.5z" fill="none" stroke="#666" /><path d="M3 3.500h7M3 6h7M3 8.500h7M3 10.500h7" stroke="#666" /></svg>
);
const BreakView = () => (
  <svg width="13" height="13" viewBox="0 0 13 13"><path d="M.5.500h12v12H.5zM.5 7.500h12M6.500.500v7" fill="none" stroke="#666" /></svg>
);
const SavePurple = () => (
  <svg width="14" height="14" viewBox="0 0 14 14"><path d="M0 0h14v14H0z" fill="#8a55a8" /><rect x="2.500" y="1.500" width="9" height="4" fill="#fff" /><rect x="4" y="9" width="6" height="5" fill="#fff" /><rect x="6" y="11" width="2" height="3" fill="#8a55a8" /></svg>
);
const QatHeadingIcon = () => (
  <svg width="28" height="30" viewBox="0 0 28 30">
    <path d="M.5.500h14l6 6v21H.5z" fill="#fff" stroke="#888" />
    <path d="M14.500.500v6h6" fill="none" stroke="#888" />
    <rect x="6.500" y="10.500" width="8" height="4" fill="#fff" stroke="#666" />
    <rect x="2" y="14" width="17" height="7" rx="1" fill="#666" />
    <rect x="6.500" y="18.500" width="8" height="5" fill="#fff" stroke="#666" />
    <rect x="15" y="18" width="12" height="12" fill="#8a55a8" />
    <rect x="17" y="19.500" width="8" height="3.500" fill="#fff" />
    <rect x="18" y="25.500" width="6" height="4.500" fill="#fff" />
  </svg>
);
const MoreIcon = () => (
  <svg width="8" height="9" viewBox="0 0 8 9"><path d="M0 1h8" stroke="#444" /><path d="M1 4l3 3 3-3" fill="none" stroke="#444" /></svg>
);
const Gt = () => (
  <svg width="5" height="9" viewBox="0 0 5 9"><path d="M.5.500l4 4-4 4" fill="none" stroke="#555" /></svg>
);

/* ---------- data ---------- */
const COLS = "ABCDEFGHIJKLMNOPQRSTUVWXYZ".split("").concat(["AA", "AB", "AC"]);
const ROWS = Array.from({ length: 41 }, (_, i) => i + 1);
const TABS: [string, number][] = [
  ["File", 61], ["Home", 58], ["Insert", 57], ["Page Layout", 91], ["Formulas", 77], ["Data", 50],
  ["Review", 65], ["View", 51], ["Help", 53], ["Acrobat", 68],
];
const NAV_TOP = ["General", "Formulas", "Proofing", "Save", "Language", "Accessibility"];
const DROP = [
  "Popular Commands", "Commands Not in the Ribbon", "All Commands", "Macros", "----------", "File Tab", "Print Preview Tab",
  "Background Removal Tab", "----------", "Home Tab", "Insert Tab", "Draw Tab", "Page Layout Tab", "Formulas Tab", "Data Tab",
  "Review Tab", "View Tab", "Developer Tab", "Add-ins Tab", "Help Tab", "Acrobat Tab", "----------",
  "SmartArt Tools | SmartArt Design Tab", "SmartArt Tools | Format Tab", "Chart Tools | Chart Design Tab",
  "Chart Tools | Format Tab", "Drawing Tools | Shape Format Tab",
];

const GroupFooter = ({ label, launcher }: { label: string; launcher?: boolean }) => (
  <GroupFoot>
    <GroupLabel>{label}</GroupLabel>
    {launcher && <Launcher><LauncherIcon /></Launcher>}
  </GroupFoot>
);

const SheetCells = () => (
  <Sheet>
    <CornerCell><Corner /></CornerCell>
    {COLS.map(c => <ColHead key={c}>{c}</ColHead>)}
    <ColHead />
    {ROWS.map(r => (
      <React.Fragment key={r}>
        <RowHead>{r}</RowHead>
        {COLS.map((c, i) => (r === 1 && i === 0 ? <SelectedCell key={c} /> : <Cell key={c} />))}
        <Cell />
      </React.Fragment>
    ))}
  </Sheet>
);

export default function App() {
  return (
    <Page>
      <Global />
      <Header>
        <Art width="517" height="64" viewBox="0 0 517 64">
          <defs><filter id="soft"><feGaussianBlur stdDeviation="6" /></filter><filter id="softer"><feGaussianBlur stdDeviation="2.500" /></filter></defs>
          <g filter="url(#softer)" fill="#1f6644">
            <ellipse cx="60" cy="18" rx="28" ry="22" />
            <ellipse cx="170" cy="30" rx="50" ry="20" />
            <ellipse cx="290" cy="12" rx="95" ry="24" />
            <ellipse cx="455" cy="10" rx="28" ry="24" />
          </g>
          <g filter="url(#soft)">
            <ellipse cx="310" cy="14" rx="16" ry="14" fill="#6a5a42" />
          </g>
        </Art>
        <TitleRow>
          <Qat>
            <QatSlot $w={31}><SaveWhite /></QatSlot>
            <QatSlot $w={40}><Undo2 size={15} color="#6ba587" strokeWidth={2.5} /><Chev c="#6ba587" /></QatSlot>
            <QatSlot $w={41}><Redo2 size={15} color="#6ba587" strokeWidth={2.5} /><Chev c="#6ba587" /></QatSlot>
            <QatSlot $w={10}><CustomizeQat /></QatSlot>
          </Qat>
          <DocTitle>Data Entry Form.xlsx  -  Excel</DocTitle>
          <Controls>
            <ControlBtn><RibbonDisplay /></ControlBtn>
            <ControlBtn><Minimize /></ControlBtn>
            <ControlBtn><Restore /></ControlBtn>
            <ControlBtn><CloseX /></ControlBtn>
          </Controls>
        </TitleRow>
        <TabRow>
          {TABS.map(([t, w]) => <Tab key={t} $w={w} $active={t === "Home"}>{t}</Tab>)}
          <TellMe><Lightbulb size={17} color="#fff" strokeWidth={1.5} /><span>Tell me what you want to do</span></TellMe>
          <ShareBtn><ShareIcon /><span>Share</span><Chev c="#fff" /></ShareBtn>
        </TabRow>
      </Header>

      <Ribbon>
        <Group $w={165}>
          <GroupBody $pl={4}>
            <Big $w={50}>
              <BigIcon><Paste /></BigIcon>
              <BigLine>Paste</BigLine>
              <BigLine><Chev /></BigLine>
            </Big>
            <Stack>
              <Row><Slot $w={16}><Cut /></Slot><Txt $ml={2}>Cut</Txt></Row>
              <Row><Slot $w={16}><Copy /></Slot><Txt $ml={2} $w={42}>Copy</Txt><Chev /></Row>
              <Row><Slot $w={16}><Painter /></Slot><Txt $ml={2}>Format Painter</Txt></Row>
            </Stack>
          </GroupBody>
          <GroupFooter label="Clipboard" launcher />
        </Group>

        <Group $w={231}>
          <GroupBody $pl={8}>
            <Stack $pt={7}>
              <Row>
                <Combo $w={117}>Calibri<TriSm /></Combo>
                <Combo $w={49} $ml={2}>11<TriSm /></Combo>
                <Slot $w={24} $ml={1}><SizeGlyph><Glyph $size={16}>A</Glyph><MiniTri up /></SizeGlyph></Slot>
                <Slot $w={24}><SizeGlyph><Glyph $size={13}>A</Glyph><MiniTri /></SizeGlyph></Slot>
              </Row>
              <Row $mt={8} $ml={-2}>
                <Slot $w={24}><Glyph $bold $size={12.5}>B</Glyph></Slot>
                <Slot $w={24}><Glyph $italic $serif $size={13}>I</Glyph></Slot>
                <Slot $w={22}><Glyph $under $size={12.5}>U</Glyph></Slot>
                <Slot $w={16}><Chev /></Slot>
                <VSep $w={12} />
                <Slot $w={16}><BordersIcon /></Slot>
                <Slot $w={20}><Chev /></Slot>
                <VSep $w={6} />
                <Slot $w={26}><ColorGlyph><FillIcon /><ColorBar $c="#ffff00" /></ColorGlyph></Slot>
                <Slot $w={8}><Chev /></Slot>
                <Slot $w={26} $ml={5}><ColorGlyph><Glyph $size={13}>A</Glyph><ColorBar $c="#ff0000" /></ColorGlyph></Slot>
                <Slot $w={8}><Chev /></Slot>
              </Row>
            </Stack>
          </GroupBody>
          <GroupFooter label="Font" launcher />
        </Group>

        <Group $w={288}>
          <GroupBody $pl={8}>
            <Stack $pt={7}>
              <Row>
                <Slot $w={24}><Lines rows={[[0, 15, 2], [0, 15, 6]]} /></Slot>
                <Slot $w={24}><Lines rows={[[0, 15, 5], [0, 15, 9]]} /></Slot>
                <ActiveSlot><Lines rows={[[1, 14, 9], [1, 14, 13]]} /></ActiveSlot>
                <VSep $w={6} />
                <Slot $w={24}><Orient /></Slot>
                <Slot $w={8}><Chev /></Slot>
                <VSep $w={12} $ml={14} />
                <Slot $w={20}><WrapIcon /></Slot>
                <Txt $ml={1}>Wrap Text</Txt>
              </Row>
              <Row $mt={8}>
                <Slot $w={24}><Lines rows={[[0, 15, 2], [0, 11, 6], [0, 15, 10], [0, 11, 14]]} /></Slot>
                <Slot $w={24}><Lines rows={[[0, 15, 2], [2, 13, 6], [0, 15, 10], [2, 13, 14]]} /></Slot>
                <Slot $w={24}><Lines rows={[[0, 15, 2], [4, 15, 6], [0, 15, 10], [4, 15, 14]]} /></Slot>
                <VSep $w={6} />
                <Slot $w={25}><Indent /></Slot>
                <Slot $w={24}><Indent right /></Slot>
                <VSep $w={6} />
                <Slot $w={23}><MergeIcon /></Slot>
                <Txt $ml={1} $w={99}>Merge &amp; Center</Txt>
                <Chev />
              </Row>
            </Stack>
          </GroupBody>
          <GroupFooter label="Alignment" launcher />
        </Group>

        <Group $w={156}>
          <GroupBody $pl={9}>
            <Stack $pt={7}>
              <Row><Combo $w={140}>General<TriSm /></Combo></Row>
              <Row $mt={8} $ml={-1}>
                <Slot $w={24}><Glyph $size={14}>$</Glyph></Slot>
                <Slot $w={12}><Chev /></Slot>
                <Slot $w={26} $ml={2}><Glyph $size={14}>%</Glyph></Slot>
                <Slot $w={20}><Glyph $bold $size={14} $pb={6}>,</Glyph></Slot>
                <VSep $w={12} />
                <Slot $w={18}><DecMore /></Slot>
                <Slot $w={22} $ml={4}><DecLess /></Slot>
              </Row>
            </Stack>
          </GroupBody>
          <GroupFooter label="Number" launcher />
        </Group>

        <Group $w={497}>
          <GroupBody $pl={10}>
            <Big $w={72}>
              <BigIcon><CondFormat /></BigIcon>
              <BigLine>Conditional</BigLine>
              <BigLine>Formatting<Chev /></BigLine>
            </Big>
            <Big $w={60}>
              <BigIcon><TableFormat /></BigIcon>
              <BigLine>Format as</BigLine>
              <BigLine>Table<Chev /></BigLine>
            </Big>
            <Gallery>
              <StyleCell $bg="#fff" $c="#000" $outline="2px solid #bdbdbd">Normal</StyleCell>
              <StyleCell $bg="#ffc7ce" $c="#9c0006">Bad</StyleCell>
              <StyleCell $bg="#c6efce" $c="#006100">Good</StyleCell>
              <StyleCell $bg="#ffeb9c" $c="#9c5700">Neutral</StyleCell>
              <StyleCell $bg="#f2f2f2" $c="#fa7d00" $bold $border="1px solid #7f7f7f">Calculation</StyleCell>
              <StyleCell $bg="#a5a5a5" $c="#fff" $bold $border="3px double #3f3f3f">Check Cell</StyleCell>
            </Gallery>
            <MoreBtn><MoreIcon /></MoreBtn>
          </GroupBody>
          <GroupFooter label="Styles" />
        </Group>

        <Group $w={144}>
          <GroupBody $pl={8}>
            <Big $w={43}><BigIcon><InsertIcon /></BigIcon><BigLine>Insert</BigLine><BigLine><Chev /></BigLine></Big>
            <Big $w={42}><BigIcon><DeleteIcon /></BigIcon><BigLine>Delete</BigLine><BigLine><Chev /></BigLine></Big>
            <Big $w={43}><BigIcon><FormatIcon /></BigIcon><BigLine>Format</BigLine><BigLine><Chev /></BigLine></Big>
          </GroupBody>
          <GroupFooter label="Cells" />
        </Group>

        <Group $w={207}>
          <GroupBody $pl={9}>
            <Stack $w={101}>
              <Row><Slot $w={19}><Sigma /></Slot><Txt $ml={2} $w={64}>AutoSum</Txt><Chev /></Row>
              <Row><Slot $w={19}><FillDown /></Slot><Txt $ml={2}>Fill</Txt><Slot $w={12}><Chev /></Slot></Row>
              <Row><Slot $w={19}><Eraser /></Slot><Txt $ml={2}>Clear</Txt><Slot $w={12}><Chev /></Slot></Row>
            </Stack>
            <Big $w={44}><BigIcon><SortIcon /></BigIcon><BigLine>Sort &amp;</BigLine><BigLine>Filter<Chev /></BigLine></Big>
            <Big $w={42}><BigIcon><FindIcon /></BigIcon><BigLine>Find &amp;</BigLine><BigLine>Select<Chev /></BigLine></Big>
          </GroupBody>
          <GroupFooter label="Editing" />
        </Group>

        <Group $w={64}>
          <GroupBody>
            <Big $w={63}><BigIcon><Dot /></BigIcon><BigLine>Add-ins</BigLine></Big>
          </GroupBody>
          <GroupFooter label="Add-ins" />
        </Group>

        <Group $w={83}>
          <GroupBody>
            <Big $w={82}><BigIcon><PdfIcon /></BigIcon><BigLine>Create</BigLine><BigLine>a PDF</BigLine></Big>
          </GroupBody>
          <GroupFooter label="Adobe Acrobat" />
        </Group>

        <Collapse>
          <svg width="10" height="6" viewBox="0 0 10 6"><path d="M.5 5.500L5 1l4.500 4.500" fill="none" stroke="#555" /></svg>
        </Collapse>
      </Ribbon>

      <FormulaBar>
        <NameBox>A1<Tri c="#777" /></NameBox>
        <Dots><DotsV /></Dots>
        <FxBox>
          <FxSlot><CloseX c="#bdbdbd" s={12} /></FxSlot>
          <FxSlot><Check /></FxSlot>
          <FxSlot><FxText>fx</FxText></FxSlot>
        </FxBox>
        <FormulaInput><Chev c="#b4b4b4" /></FormulaInput>
      </FormulaBar>

      <SheetArea>
        <SheetCells />
        <VScroll>
          <ScrollBtn><Tri up /></ScrollBtn>
          <VThumb />
          <ScrollBtn $bottom><Tri /></ScrollBtn>
        </VScroll>
      </SheetArea>

      <SheetBar>
        <NavArrows><NavTri /><NavTri right /></NavArrows>
        <SheetTab>Sheet1</SheetTab>
        <AddSheet><AddCircle /></AddSheet>
        <HDots><DotsH /></HDots>
        <HScroll>
          <ScrollBtn $w={14}><svg width="5" height="8" viewBox="0 0 5 8"><path d="M5 0L0 4l5 4z" fill="#444" /></svg></ScrollBtn>
          <HThumb />
          <HTrack />
          <ScrollBtn $w={14}><svg width="5" height="8" viewBox="0 0 5 8"><path d="M0 0l5 4-5 4z" fill="#444" /></svg></ScrollBtn>
        </HScroll>
      </SheetBar>

      <StatusBar>
        <StatusTxt $w={51}>Ready</StatusTxt>
        <A11y />
        <StatusTxt $ml={3}>Accessibility: Good to go</StatusTxt>
        <StatusRight>
          <Display />
          <StatusTxt $ml={2} $w={101}>Display Settings</StatusTxt>
          <ViewBtn $on><NormalView /></ViewBtn>
          <ViewBtn><PageView /></ViewBtn>
          <ViewBtn><BreakView /></ViewBtn>
          <Slot $w={18}><svg width="8" height="1" viewBox="0 0 8 1"><path d="M0 .5h8" stroke="#444" /></svg></Slot>
          <ZoomTrack><ZoomThumb /></ZoomTrack>
          <Slot $w={18}><svg width="9" height="9" viewBox="0 0 9 9"><path d="M0 4.500h9M4.500 0v9" stroke="#444" /></svg></Slot>
          <StatusTxt $ml={8}>100%</StatusTxt>
        </StatusRight>
      </StatusBar>

      <Dialog>
        <DialogHead>
          <DialogTitle>Excel Options</DialogTitle>
          <HeadBtn>?</HeadBtn>
          <HeadBtn><CloseX c="#444" s={10} /></HeadBtn>
        </DialogHead>
        <DialogBody>
          <Nav>
            {NAV_TOP.map(n => <NavItem key={n}>{n}</NavItem>)}
            <NavItem $mt={4}>Advanced</NavItem>
            <NavRule />
            <NavItem $mt={5}>Customize Ribbon</NavItem>
            <NavSelected>Quick Access Toolbar</NavSelected>
            <NavItem>Add-ins</NavItem>
            <NavItem>Trust Center</NavItem>
          </Nav>
          <Main>
            <Heading><QatHeadingIcon /><span>Customize the Quick Access Toolbar.</span></Heading>
            <Columns>
              <LeftCol>
                <FieldLabel><span><Mn>C</Mn>hoose commands from:</span><Info /></FieldLabel>
                <OpenCombo>Popular Commands<ComboArrow><Tri /></ComboArrow></OpenCombo>
                <Dropdown>
                  <DropList>
                    {DROP.map((d, i) => <DropItem key={i} $on={d === "All Commands"}>{d}</DropItem>)}
                  </DropList>
                  <DropScroll>
                    <DropBtn><Tri up /></DropBtn>
                    <DropThumb />
                    <DropBtn $bottom><Tri /></DropBtn>
                  </DropScroll>
                </Dropdown>
              </LeftCol>
              <MidCol>
                <Btn $w={80}><span><Mn>A</Mn>dd &gt;&gt;</span></Btn>
                <Btn $w={80} $off><span>&lt;&lt; <Mn>R</Mn>emove</span></Btn>
              </MidCol>
              <RightCol>
                <FieldLabel><span>Customize <Mn>Q</Mn>uick Access Toolbar:</span><Info /></FieldLabel>
                <PlainCombo>For all documents (default)<Tri /></PlainCombo>
                <QatList>
                  <QatRow><QatIcon><SavePurple /></QatIcon>Save</QatRow>
                  <QatRow><QatIcon><Undo2 size={16} color="#4a7ebb" strokeWidth={2.5} /></QatIcon>Undo<QatMore><Gt /></QatMore></QatRow>
                  <QatRow><QatIcon><Redo2 size={17} color="#4a7ebb" strokeWidth={2.8} /></QatIcon>Redo<QatMore><Gt /></QatMore></QatRow>
                </QatList>
                <Btn $w={65} $off $mt={3}><span><Mn>M</Mn>odify...</span></Btn>
                <CustomRow>
                  <CustomLabel>Customizations:</CustomLabel>
                  <CustomBtns>
                    <BtnWithInfo><Btn $w={62}><span>R<Mn>e</Mn>set</span><Tri /></Btn><InfoWrap><Info /></InfoWrap></BtnWithInfo>
                    <BtnWithInfo><Btn $w={109}><span>Im<Mn>p</Mn>ort/Export</span><Tri /></Btn><InfoWrap><Info /></InfoWrap></BtnWithInfo>
                  </CustomBtns>
                </CustomRow>
              </RightCol>
              <SideCol>
                <MoveBtn><Tri c="#aaa" up /></MoveBtn>
                <MoveBtn><Tri c="#aaa" /></MoveBtn>
              </SideCol>
            </Columns>
            <Footer>
              <Btn $w={75}>OK</Btn>
              <Btn $w={75}>Cancel</Btn>
            </Footer>
          </Main>
        </DialogBody>
      </Dialog>

      <ArrowOverlay width="145" height="29" viewBox="0 0 145 29">
        <path d="M0 14.500L35 0v10h105a4.500 4.500 0 0 1 0 9.500H35V29z" fill="#ff5f00" />
      </ArrowOverlay>
    </Page>
  );
}
